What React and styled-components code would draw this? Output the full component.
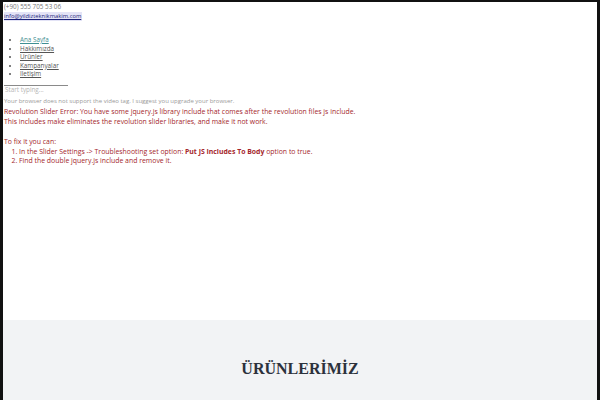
import styled, { createGlobalStyle } from "styled-components";

const GlobalStyle = createGlobalStyle`
  html, body {
    margin: 0;
    padding: 0;
    background: #111;
  }
  body {
    font-family: "Open Sans", "Liberation Sans", sans-serif;
  }
`;

const Page = styled.div`
  margin: 2px 3px 0 3px;
  min-height: 398px;
  background: #fff;
  display: flex;
  flex-direction: column;
`;

const Top = styled.div`
  min-height: 318px;
  padding-left: 1px;
  font-size: 6.3px;
  line-height: 9px;
`;

const Phone = styled.div`
  color: #777;
`;

const Mail = styled.a`
  display: inline-block;
  color: #1d237a;
  background: #e3e3f6;
  text-decoration: underline;
  font-size: 5.8px;
  padding-right: 1px;
`;

const Menu = styled.ul`
  margin: 15px 0 0 0;
  padding-left: 16px;
  line-height: 8.6px;
  color: #555;
`;

const MenuItem = styled.li`
  list-style: disc;
  & a {
    color: ${(p) => (p.$active ? "#3f8f93" : "#555")};
    text-decoration: underline;
  }
`;

const Search = styled.input`
  display: block;
  box-sizing: border-box;
  margin: 6px 0 0 0;
  width: 64px;
  height: 9px;
  padding: 0 1px;
  border: none;
  border-top: 1px solid #8a8a8a;
  font-family: inherit;
  font-size: 6.3px;
  color: #777;
  background: transparent;
  &::placeholder {
    color: #b5b5b5;
  }
`;

const VideoNote = styled.div`
  margin-top: 3px;
  color: #9a9a9a;
  font-size: 6px;
`;

const Error = styled.div`
  margin-top: 1px;
  color: #a4262c;
  font-size: 6.9px;
  line-height: 9.6px;
`;

const Gap = styled.div`
  height: 11px;
`;

const Steps = styled.ol`
  margin: 0;
  padding-left: 15px;
  & b {
    font-weight: 700;
  }
`;

const Products = styled.section`
  flex: 1;
  background: #f2f3f5;
  display: flex;
  justify-content: center;
  padding-top: 39px;
`;

const Heading = styled.h2`
  margin: 0;
  font-family: "Liberation Serif", "Times New Roman", serif;
  font-weight: 700;
  font-size: 16px;
  line-height: 20px;
  color: #2c313c;
`;

const links = ["Ana Sayfa", "Hakkımızda", "Ürünler", "Kampanyalar", "İletişim"];

export default function App() {
  return (
    <>
      <GlobalStyle />
      <Page>
        <Top>
          <Phone>(+90) 555 705 53 06</Phone>
          <Mail href="#">info@yildizteknikmakim.com</Mail>
          <Menu>
            {links.map((l, i) => (
              <MenuItem key={l} $active={i === 0}>
                <a href="#">{l}</a>
              </MenuItem>
            ))}
          </Menu>
          <Search placeholder="Start typing..." />
          <VideoNote>
            Your browser does not support the video tag. I suggest you upgrade your browser.
          </VideoNote>
          <Error>
            Revolution Slider Error: You have some jquery.js library include that comes after the
            revolution files js include.
            <br />
            This includes make eliminates the revolution slider libraries, and make it not work.
            <Gap />
            To fix it you can:
            <Steps>
              <li>
                In the Slider Settings -&gt; Troubleshooting set option: <b>Put JS Includes To Body</b>{" "}
                option to true.
              </li>
              <li>Find the double jquery.js include and remove it.</li>
            </Steps>
          </Error>
        </Top>
        <Products>
          <Heading>ÜRÜNLERİMİZ</Heading>
        </Products>
      </Page>
    </>
  );
}
